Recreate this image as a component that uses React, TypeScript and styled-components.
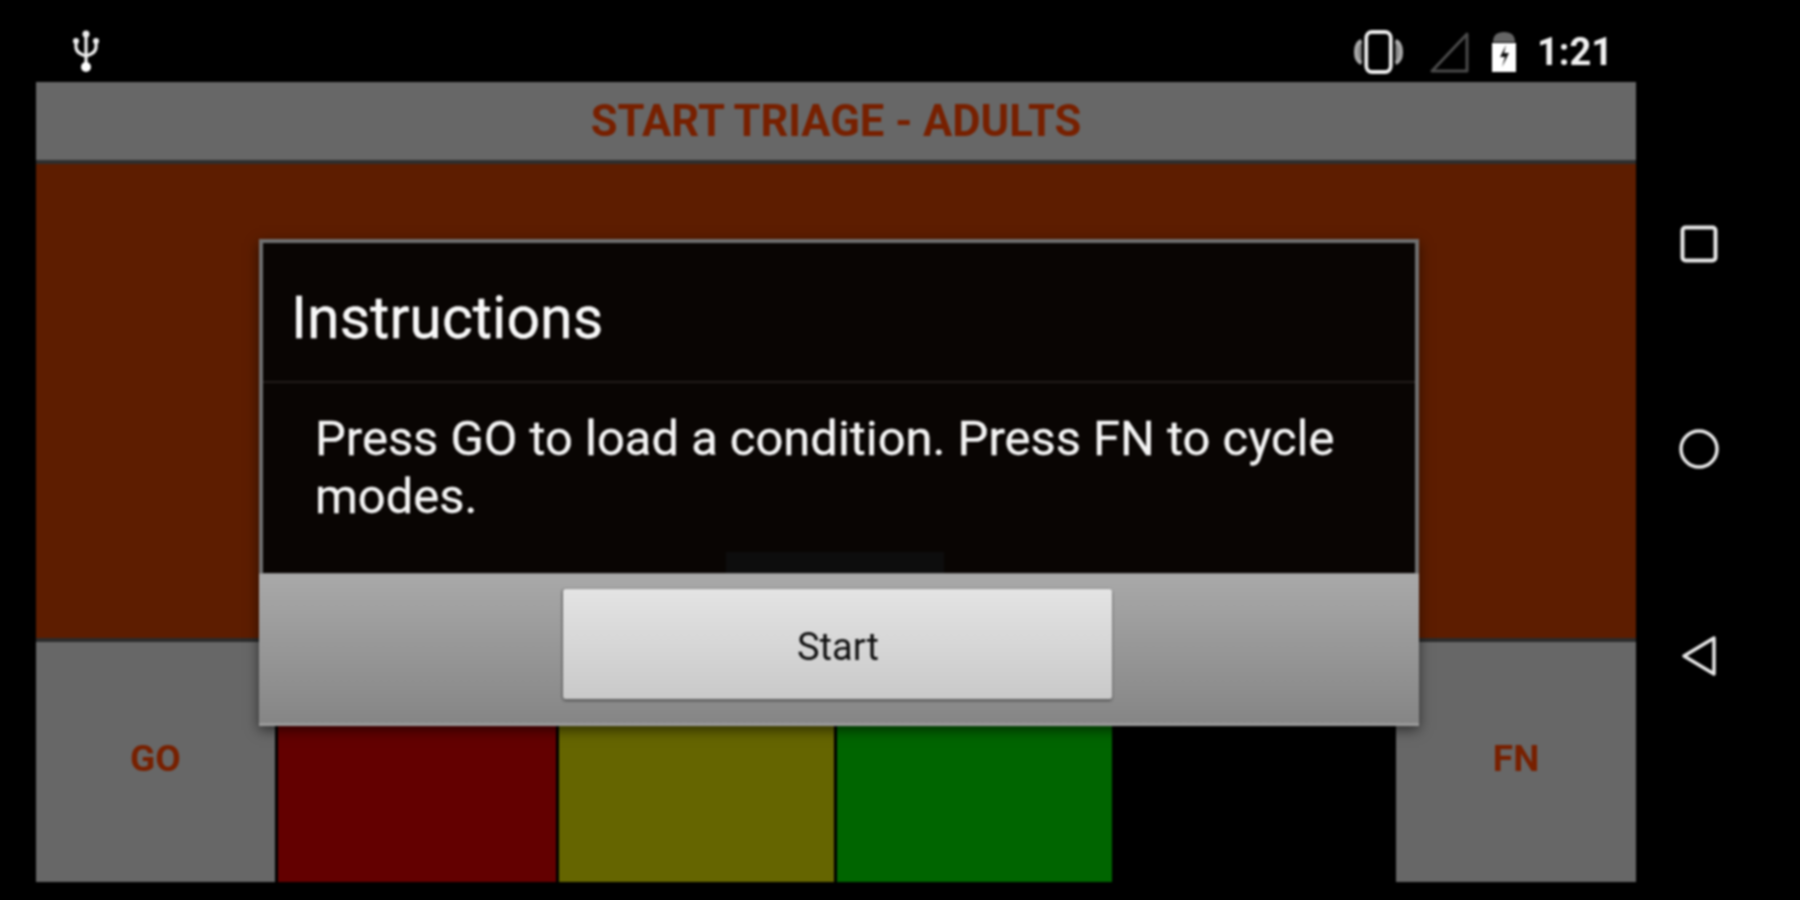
import styled, { createGlobalStyle } from 'styled-components'

const GlobalStyle = createGlobalStyle`
  html, body {
    margin: 0;
    padding: 0;
    background: #000;
    overflow: hidden;
  }
`

const Screen = styled.div`
  width: 1800px;
  height: 900px;
  background: #000;
  display: flex;
  font-family: Roboto, "Liberation Sans", sans-serif;
  filter: blur(1px);
`

const Main = styled.div`
  width: 1636px;
  display: flex;
  flex-direction: column;
`

const StatusBar = styled.div`
  height: 82px;
  display: flex;
  align-items: center;
  padding: 21px 23px 0 70px;
  box-sizing: border-box;
  color: #fff;
`

const StatusIcons = styled.div`
  margin-left: auto;
  display: flex;
  align-items: center;
`

const IconSlot = styled.span<{ $right: number }>`
  display: flex;
  margin-right: ${props => props.$right}px;
`

const Clock = styled.span`
  font-size: 38px;
  font-weight: 700;
  color: #f2f2f2;
`

const Panel = styled.div`
  position: relative;
  margin-left: 36px;
  height: 800px;
  display: flex;
  flex-direction: column;
`

const TitleBar = styled.div`
  height: 78px;
  background: #676767;
  border-bottom: 4px solid #2e2e2e;
  display: flex;
  align-items: center;
  justify-content: center;
`

const AccentLabel = styled.span<{ $size: number; $lift?: number }>`
  font-family: Roboto, "Liberation Sans", sans-serif;
  font-weight: 700;
  font-size: ${props => props.$size}px;
  color: #772000;
  padding-bottom: ${props => props.$lift || 0}px;
`

const Stage = styled.div`
  height: 474px;
  background: #5d1d00;
  border-bottom: 4px solid #2b2b2b;
`

const KeyRow = styled.div`
  height: 240px;
  display: flex;
`

const SideKey = styled.div<{ $width: number }>`
  width: ${props => props.$width}px;
  background: #676767;
  display: flex;
  align-items: center;
  justify-content: center;
`

const ColorKey = styled.div<{ $color: string; $width: number }>`
  width: ${props => props.$width}px;
  margin-left: 3px;
  background: ${props => props.$color};
`

const Dialog = styled.div`
  position: absolute;
  left: 223px;
  top: 157px;
  width: 1160px;
  height: 487px;
  display: flex;
  flex-direction: column;
  background: #090503;
  border: 4px solid #6f6f6f;
  border-bottom: 0;
  box-sizing: border-box;
  box-shadow: 0 4px 12px rgba(0, 0, 0, 0.55);
`

const DialogTitle = styled.div`
  height: 140px;
  flex: none;
  display: flex;
  align-items: center;
  padding: 10px 0 0 28px;
  box-sizing: border-box;
  border-bottom: 2px solid #211c1a;
  font-size: 59px;
  color: #f8f8f8;
  -webkit-text-stroke: 0.4px #f8f8f8;
`

const DialogBody = styled.div`
  position: relative;
  flex: 1;
  padding: 27px 30px 0 52px;
  font-size: 48.9px;
  line-height: 58px;
  color: #f4f4f4;
  -webkit-text-stroke: 0.3px #f4f4f4;
`

const ScrollHint = styled.div`
  position: absolute;
  left: 463px;
  bottom: 0;
  width: 218px;
  height: 21px;
  background: #0d0d0d;
`

const ButtonBar = styled.div`
  height: 153px;
  flex: none;
  margin: 0 -4px;
  display: flex;
  justify-content: center;
  padding: 15px 3px 0 0;
  box-sizing: border-box;
  background: linear-gradient(#a9a9a9, #858585);
  border-top: 1px solid #8a8a8a;
  box-shadow: inset 0 -3px 0 #9a9a9a;
`

const StartButton = styled.button`
  width: 549px;
  height: 110px;
  padding: 6px 0 0 1px;
  border: 0;
  border-radius: 3px;
  background: linear-gradient(#e4e4e4, #c9c9c9);
  box-shadow: 0 2px 3px #555, -1px 0 2px #666;
  font-family: Roboto, "Liberation Sans", sans-serif;
  font-size: 38px;
  color: #111;
`

const NavBar = styled.div`
  flex: 1;
  display: flex;
  flex-direction: column;
  align-items: center;
  padding: 225px 38px 0 0;
  gap: 166px;
`

const UsbIcon = () => (
  <svg width="34" height="46" viewBox="0 0 34 46" fill="none" stroke="#eee" strokeWidth="3.2" strokeLinecap="round">
    <path d="M16 5v30M6 13v5c0 5 4 7 10 9 6-2 10-4 10-9v-5" />
    <circle cx="16" cy="5" r="3.5" fill="#eee" stroke="none" />
    <circle cx="6" cy="12" r="3" fill="#eee" stroke="none" />
    <circle cx="26" cy="12" r="3" fill="#eee" stroke="none" />
    <circle cx="16" cy="38" r="5" fill="#fff" stroke="none" />
  </svg>
)

const VibrateIcon = () => (
  <svg width="49" height="44" viewBox="0 0 52 44" fill="none" preserveAspectRatio="none">
    <rect x="13" y="2" width="26" height="40" rx="6" stroke="#eee" strokeWidth="4" />
    <path d="M8 11 Q2 13 2 22 Q2 31 8 33M44 11 Q50 13 50 22 Q50 31 44 33" stroke="#aaa" strokeWidth="4" fill="#888" />
  </svg>
)

const SignalIcon = () => (
  <svg width="40" height="42" viewBox="0 0 40 42" fill="none">
    <path d="M38 3v37H3z" stroke="#4a4a4a" strokeWidth="3" strokeLinejoin="round" />
  </svg>
)

const BatteryIcon = () => (
  <svg width="26" height="44" viewBox="0 0 26 44">
    <path d="M2 12q0-10 11-10t11 10z" fill="#666" />
    <path d="M1 13h24v29H1z" fill="#fff" />
    <path d="M15 15l-6 12h5l-3 10 7-14h-5z" fill="#111" />
  </svg>
)

const SquareIcon = () => (
  <svg width="38" height="38" viewBox="0 0 38 38" fill="none">
    <rect x="2.5" y="2.5" width="33" height="33" rx="3" stroke="#e8e8e8" strokeWidth="4" />
  </svg>
)

const CircleIcon = () => (
  <svg width="40" height="40" viewBox="0 0 40 40" fill="none">
    <circle cx="20" cy="20" r="18" stroke="#e8e8e8" strokeWidth="3.5" />
  </svg>
)

const BackIcon = () => (
  <svg width="36" height="42" viewBox="0 0 36 42" fill="none">
    <path d="M33 3v36L3 21z" stroke="#e8e8e8" strokeWidth="3.5" strokeLinejoin="round" />
  </svg>
)

export default function App() {
  return (
    <>
      <GlobalStyle />
      <Screen>
        <Main>
          <StatusBar>
            <UsbIcon />
            <StatusIcons>
              <IconSlot $right={26}><VibrateIcon /></IconSlot>
              <IconSlot $right={22}><SignalIcon /></IconSlot>
              <IconSlot $right={20}><BatteryIcon /></IconSlot>
              <Clock>1:21</Clock>
            </StatusIcons>
          </StatusBar>
          <Panel>
            <TitleBar>
              <AccentLabel $size={43.5}>START TRIAGE - ADULTS</AccentLabel>
            </TitleBar>
            <Stage />
            <KeyRow>
              <SideKey $width={239}>
                <AccentLabel $size={37} $lift={8}>GO</AccentLabel>
              </SideKey>
              <ColorKey $color="#630000" $width={278} />
              <ColorKey $color="#656500" $width={275} />
              <ColorKey $color="#006500" $width={276} />
              <ColorKey $color="#000" $width={281} />
              <SideKey $width={240}>
                <AccentLabel $size={37} $lift={8}>FN</AccentLabel>
              </SideKey>
            </KeyRow>
            <Dialog>
              <DialogTitle>Instructions</DialogTitle>
              <DialogBody>
                Press GO to load a condition. Press FN to cycle modes.
                <ScrollHint />
              </DialogBody>
              <ButtonBar>
                <StartButton>Start</StartButton>
              </ButtonBar>
            </Dialog>
          </Panel>
        </Main>
        <NavBar>
          <SquareIcon />
          <CircleIcon />
          <BackIcon />
        </NavBar>
      </Screen>
    </>
  )
}
